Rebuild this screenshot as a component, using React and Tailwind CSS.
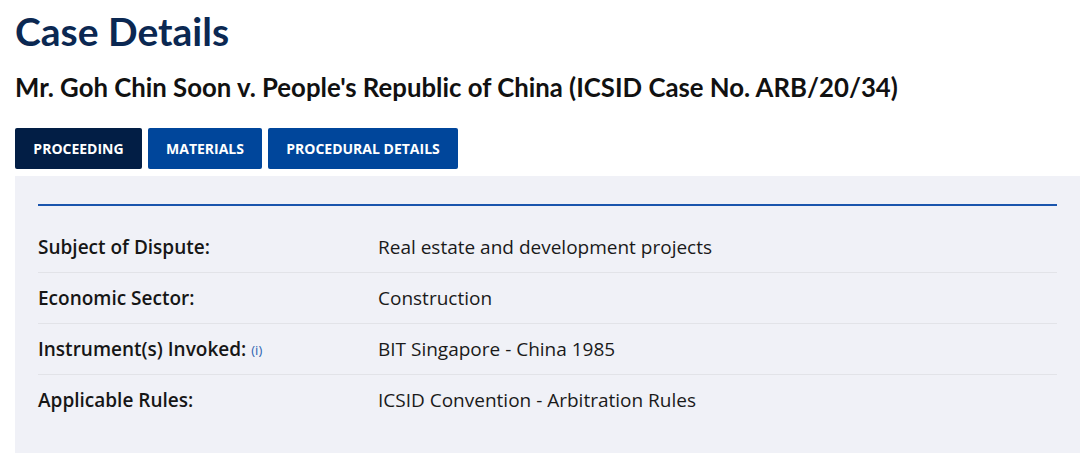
export default function App() {
  const rows = [
    ["Subject of Dispute:", "Real estate and development projects", false],
    ["Economic Sector:", "Construction", false],
    ["Instrument(s) Invoked:", "BIT Singapore - China 1985", true],
    ["Applicable Rules:", "ICSID Convention - Arbitration Rules", false],
  ];
  return (
    <div className="w-[1080px] h-[453px] bg-white overflow-hidden pl-[15px]">
      <h1 className="pt-[8px] text-[39px] leading-[46px] font-bold text-[#0b2852] font-['Lato',sans-serif]">
        Case Details
      </h1>
      <h2 className="mt-[17px] text-[25.75px] leading-[32px] font-bold text-[#111] font-['Lato',sans-serif]">
        Mr. Goh Chin Soon v. People's Republic of China (ICSID Case No. ARB/20/34)
      </h2>
      <div className="mt-[25px] flex gap-[6px] font-['Open_Sans',sans-serif] text-[14px] font-bold text-white">
        <div className="h-[41px] w-[127px] flex items-center justify-center bg-[#021e45] rounded-[2px]">PROCEEDING</div>
        <div className="h-[41px] w-[114px] flex items-center justify-center bg-[#00469b] rounded-[2px]">MATERIALS</div>
        <div className="h-[41px] w-[190px] flex items-center justify-center bg-[#00469b] rounded-[2px]">PROCEDURAL DETAILS</div>
      </div>
      <div className="mt-[7px] h-[300px] bg-[#f0f1f7] pl-[23px] pr-[23px] pt-[28px] font-['Open_Sans',sans-serif] text-[19px] text-[#1a1a1a]">
        <div className="h-[2px] bg-[#1a55ad]" />
        <div className="mt-[16px]">
          {rows.map(([k, v, info], i) => (
            <div
              key={k}
              className={`flex items-center h-[51px] ${i < rows.length - 1 ? "border-b border-[#e2e3e8]" : ""}`}
            >
              <div className="w-[340px] flex items-center font-semibold text-[#161616]">
                <span>{k}</span>
                {info && <span className="ml-[5px] mt-[3px] text-[13px] font-normal text-[#2d62b0]">(i)</span>}
              </div>
              <div>{v}</div>
            </div>
          ))}
        </div>
      </div>
    </div>
  );
}
